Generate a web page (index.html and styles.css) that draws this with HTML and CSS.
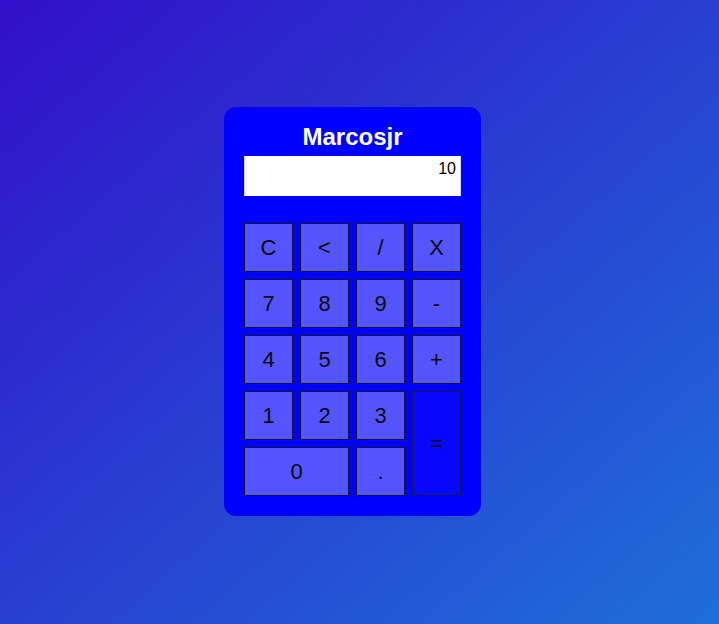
FILE: index.html
```html
<!DOCTYPE html>
<html>
<head>
<meta charset="utf-8">
<link rel="stylesheet" href="styles.css">
</head>
<body>
<div class="page">
  <div class="calc">
    <h1 class="title">Marcosjr</h1>
    <div class="display">10</div>
    <div class="keys">
      <button class="key">C</button>
      <button class="key">&lt;</button>
      <button class="key">/</button>
      <button class="key">X</button>
      <button class="key">7</button>
      <button class="key">8</button>
      <button class="key">9</button>
      <button class="key">-</button>
      <button class="key">4</button>
      <button class="key">5</button>
      <button class="key">6</button>
      <button class="key">+</button>
      <button class="key">1</button>
      <button class="key">2</button>
      <button class="key">3</button>
      <button class="key key-eq">=</button>
      <button class="key key-zero">0</button>
      <button class="key">.</button>
    </div>
  </div>
</div>
</body>
</html>
```
FILE: styles.css
```css
html, body {
  margin: 0;
  padding: 0;
  height: 100%;
}
body {
  background: linear-gradient(to bottom right, #3210c9, #1e6fd9);
  font-family: "Liberation Sans", Arial, sans-serif;
}
.page {
  height: 624px;
  display: flex;
  justify-content: center;
  align-items: flex-start;
  padding-top: 107px;
  padding-right: 14px;
  box-sizing: border-box;
}
.calc {
  width: 257px;
  box-sizing: border-box;
  background: #0000ff;
  border-radius: 12px;
  padding: 16px 20px 20px;
}
.title {
  margin: 0 0 5px;
  font-size: 24px;
  line-height: 28px;
  font-weight: bold;
  color: #ffffff;
  text-align: center;
}
.display {
  height: 40px;
  box-sizing: border-box;
  background: #ffffff;
  border-left: 1px solid #d4d4ff;
  border-right: 1px solid #d4d4ff;
  padding: 4px 4px 0 0;
  text-align: right;
  font-size: 16px;
  line-height: 18px;
  color: #000000;
  margin-bottom: 27px;
}
.keys {
  display: grid;
  grid-template-columns: repeat(4, 49px);
  grid-auto-rows: 49px;
  gap: 7px;
}
.key {
  margin: 0;
  padding: 0;
  background: #5555ff;
  border: 1px solid #14142e;
  color: #0a0a0a;
  font-family: "Liberation Sans", Arial, sans-serif;
  font-size: 22px;
  line-height: 1;
}
.key-eq {
  grid-column: 4;
  grid-row: 4 / span 2;
  background: #0808ff;
  border: 1px solid #16164a;
}
.key-zero {
  grid-column: 1 / span 2;
}
```
